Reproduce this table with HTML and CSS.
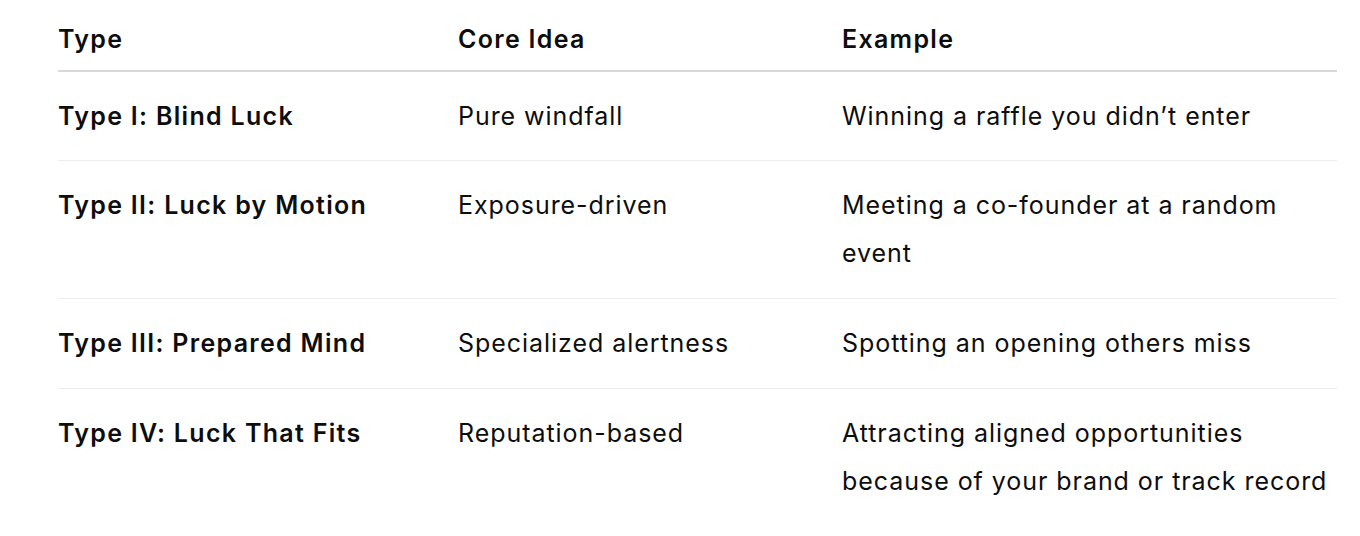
FILE: index.html
```html
<!DOCTYPE html>
<html lang="en">
<head>
<meta charset="utf-8">
<title>Types of Luck</title>
<link rel="stylesheet" href="styles.css">
</head>
<body>
<div class="wrap">
  <table class="luck">
    <colgroup>
      <col class="c1">
      <col class="c2">
      <col class="c3">
    </colgroup>
    <thead>
      <tr><th>Type</th><th>Core Idea</th><th>Example</th></tr>
    </thead>
    <tbody>
      <tr><td class="name">Type I: Blind Luck</td><td>Pure windfall</td><td>Winning a raffle you didn’t enter</td></tr>
      <tr><td class="name">Type II: Luck by Motion</td><td>Exposure-driven</td><td>Meeting a co-founder at a random event</td></tr>
      <tr><td class="name">Type III: Prepared Mind</td><td>Specialized alertness</td><td>Spotting an opening others miss</td></tr>
      <tr><td class="name">Type IV: Luck That Fits</td><td>Reputation-based</td><td>Attracting aligned opportunities because of your brand or track record</td></tr>
    </tbody>
  </table>
</div>
</body>
</html>
```

FILE: styles.css
```css
html, body {
  margin: 0;
  padding: 0;
  background: #ffffff;
}
body {
  font-family: Inter, "Noto Sans", "Liberation Sans", sans-serif;
  color: #0d0d0d;
  font-size: 25px;
  line-height: 48px;
  letter-spacing: 0.95px;
}
.wrap {
  padding: 15px 23px 0 58px;
}
.luck {
  width: 1279px;
  border-collapse: collapse;
  table-layout: fixed;
}
.c1 { width: 384px; }
.c2 { width: 384px; }
.c3 { width: 511px; }
.luck th {
  text-align: left;
  font-weight: 600;
  letter-spacing: 1.3px;
  padding: 0 16px 7px 16px;
  border-bottom: 2px solid #d9d9d9;
}
.luck td {
  padding: 20px 16px 21px 16px;
  vertical-align: top;
  border-bottom: 1px solid #ededed;
}
.luck tbody tr:first-child td {
  padding-bottom: 20px;
}
.luck tbody tr:last-child td {
  border-bottom: none;
}
.luck th:first-child, .luck td:first-child { padding-left: 0; }
.luck th:last-child, .luck td:last-child { padding-right: 0; }
.luck td.name { font-weight: 600; letter-spacing: 1.3px; }
```
